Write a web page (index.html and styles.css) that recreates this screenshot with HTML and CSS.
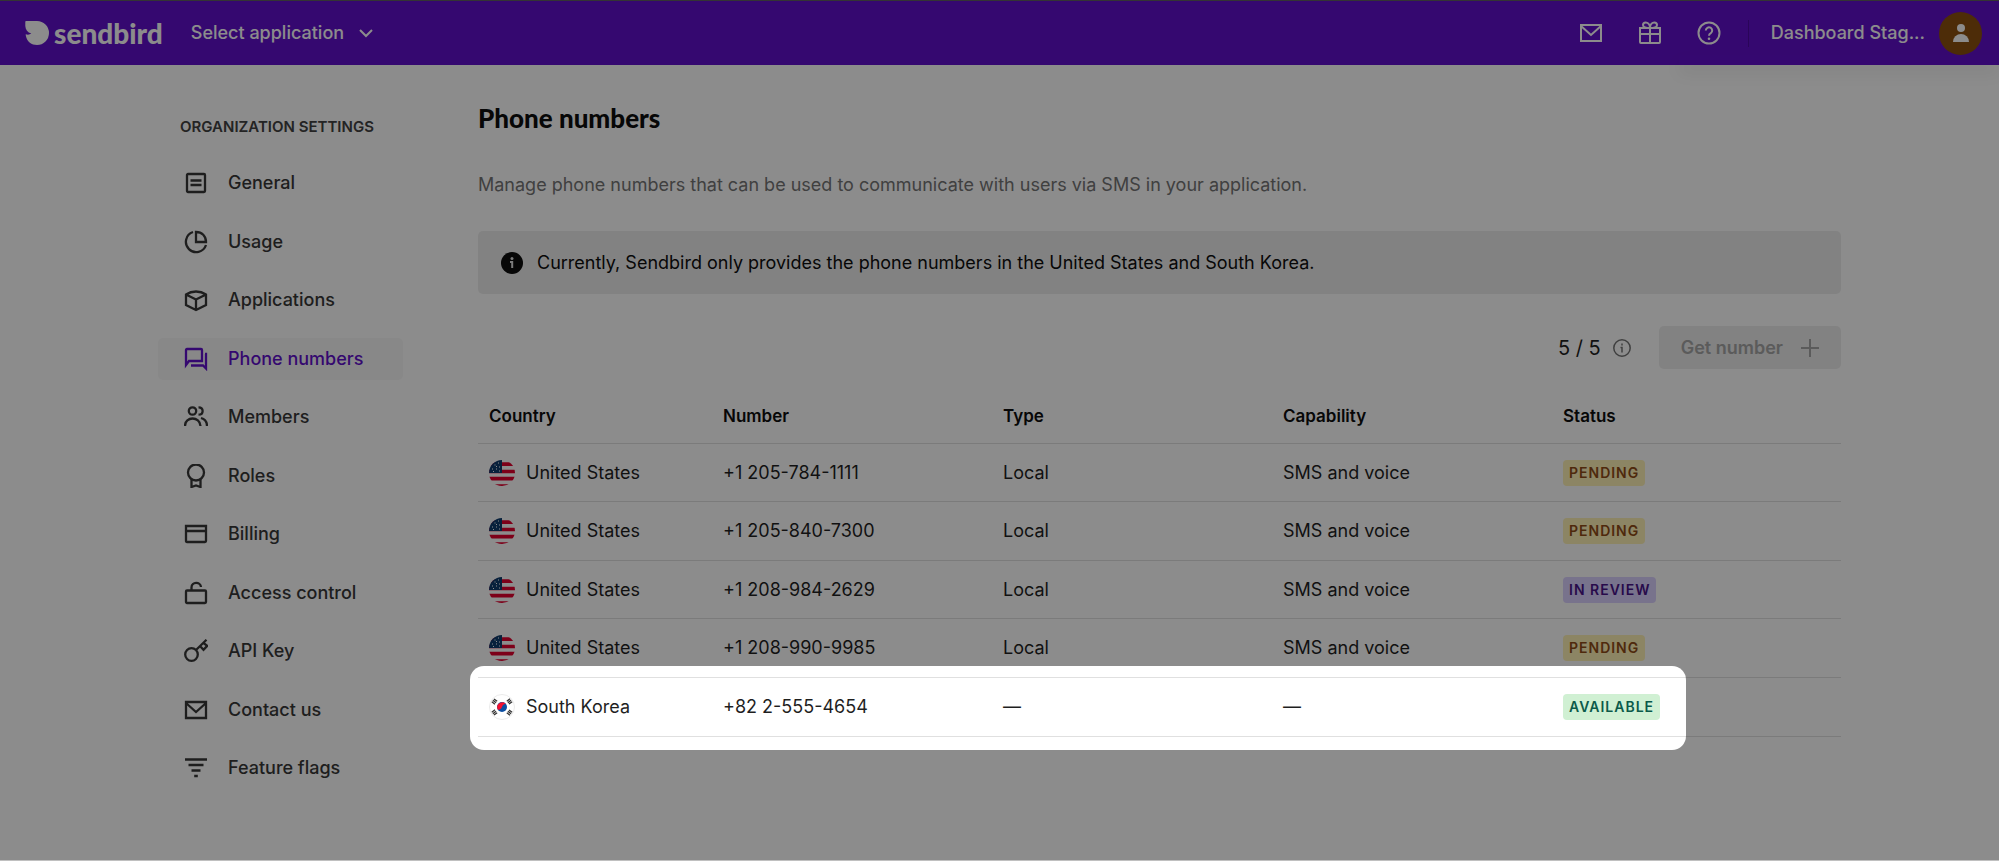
FILE: index.html
```
<!DOCTYPE html>
<html lang="en">
<head>
    <meta charset="UTF-8">
    <meta name="viewport" content="width=device-width, initial-scale=1.0">
    <title>Phone numbers - Sendbird Dashboard</title>
    <link rel="stylesheet" href="styles.css">
</head>
<body>
    <!-- Shared flags -->
    <svg class="defs" width="0" height="0" aria-hidden="true">
        <symbol id="flag-us" viewBox="0 0 26 26">
            <clipPath id="round"><circle cx="13" cy="13" r="13"/></clipPath>
            <g clip-path="url(#round)">
                <rect width="26" height="26" fill="#fff"/>
                <path d="M0 4.200h26M0 11.500h26M0 18.700h26M0 26h26" stroke="#e3002f" stroke-width="3.700"/>
                <rect width="13" height="13" fill="#0f3c6e"/>
                <path d="M9 3h1M5.500 5h1M10 7h1M3 9h1M7 9h1M7 6.500h1M4 11.500h1M10 11h1" stroke="#fff" stroke-width="1"/>
            </g>
        </symbol>
        <symbol id="flag-kr" viewBox="0 0 26 26">
            <circle cx="13" cy="13" r="12.5" fill="#fff" stroke="#ebebeb"/>
            <circle cx="13" cy="13" r="5" fill="#0b4ea2"/>
            <path d="M8.700 15.500a5 5 0 0 1 8.600-5c-1.400-1-3.200-.5-4.300 2.500-1 2.500-2.800 3.300-4.300 2.500z" fill="#f5102f"/>
            <g stroke="#333" stroke-width="4" stroke-dasharray="1.300 .5">
                <path d="M4 9.500l3-4M19 20.500l3-4M4 16.500l3 4M19 5.500l3 4"/>
            </g>
        </symbol>
    </svg>

    <header class="header">
        <a href="#" class="logo">
            <svg class="logo-mark" viewBox="0 0 24 24" fill="currentColor"><path d="M1 0h11a12 12 0 1 1 0 24C6.500 24 2.200 20.500 1 15.500c-.2-1-.3-1.600-.3-2.300 2 .8 4 .5 5.600-.7C2.500 11.500.5 8.500.3 5V1q0-1 .7-1z"/></svg>
            <span>sendbird</span>
        </a>
        <button type="button" class="app-select">
            Select application
            <svg width="14" height="14" viewBox="0 0 14 14" fill="none" stroke="currentColor" stroke-width="2"><path d="M1 4l6 6 6-6"/></svg>
        </button>
        <div class="header-right">
            <div class="header-icons">
                <button type="button" aria-label="Messages">
                    <svg class="icon" viewBox="0 0 24 24"><path d="M2 4h20v16H2zM2 5l10 9 10-9"/></svg>
                </button>
                <button type="button" aria-label="What's new">
                    <svg class="icon" viewBox="0 0 24 24"><path d="M2 7h20v6H2zM2 13v8q0 1 1 1h18q1 0 1-1v-8M12 7v15M12 7C8 7 5 6 5 4s1-2.500 2.700-2.500S12 3 12 7c0-4 2.600-5.500 4.300-5.500S19 2 19 4s-3 3-7 3"/></svg>
                </button>
                <button type="button" aria-label="Help">
                    <svg class="icon" viewBox="0 0 24 24"><circle cx="12" cy="12" r="10.500"/><path d="M8.800 9.500a3.200 3.200 0 1 1 5 2.700c-1.200.7-1.800 1.300-1.800 2.500"/><circle class="solid" cx="12" cy="17.800" r="1.300"/></svg>
                </button>
            </div>
            <span class="divider"></span>
            <a href="#" class="account">
                Dashboard Stag...
                <span class="avatar">
                    <svg width="16" height="20" viewBox="0 0 16 20" fill="currentColor"><circle cx="8" cy="5" r="4"/><path d="M0 19a8 8 0 0 1 16 0z"/></svg>
                </span>
            </a>
        </div>
    </header>

    <div class="page">
        <nav class="sidebar" aria-label="Organization settings">
            <h2 class="sidebar-title">ORGANIZATION SETTINGS</h2>
            <ul class="menu">
                <li><a href="#"><svg class="icon" viewBox="0 0 24 24"><rect x="3" y="3" width="18" height="18" rx="1"/><path d="M6.500 9.500h11M6.500 14h11"/></svg>General</a></li>
                <li><a href="#"><svg class="icon" viewBox="0 0 24 24"><path d="M9 2A10.300 10.300 0 1 0 22 15M12 2v10h10C22 6 18 2 12 2z"/></svg>Usage</a></li>
                <li><a href="#"><svg class="icon" viewBox="0 0 24 24"><path d="M2 6.500l10 5 10-5M12 11.500V22M2 6.500q4.500-3 10-3t10 3V17l-10 5-10-5z"/></svg>Applications</a></li>
                <li><a href="#" class="active"><svg class="icon" viewBox="0 0 24 24"><path d="M2 18V3q0-1 1-1h14q1 0 1 1v11H5zM7 18.500h12l3 3V7h-1"/></svg>Phone numbers</a></li>
                <li><a href="#"><svg class="icon" viewBox="0 0 24 24"><circle cx="8.500" cy="6" r="3.700"/><path d="M1 21c0-10 15-10 15.500 0M14.500 2.300c5.500 0 5.500 7.400 0 7.400M17 13c3.500 1 6 4 6 8"/></svg>Members</a></li>
                <li><a href="#"><svg class="icon" viewBox="0 0 24 24"><circle cx="12" cy="8.500" r="8"/><path d="M7.500 15v8l4.500-1.500 4.500 1.500v-8"/></svg>Roles</a></li>
                <li><a href="#"><svg class="icon" viewBox="0 0 24 24"><path d="M2 4h20v15q0 1-1 1H3q-1 0-1-1zM2 9h20"/></svg>Billing</a></li>
                <li><a href="#"><svg class="icon" viewBox="0 0 24 24"><rect x="2" y="9.500" width="20" height="12.500" rx="1"/><path d="M7.500 9.500V6.500c0-6 9-6 9.500-.5"/></svg>Access control</a></li>
                <li><a href="#"><svg class="icon" viewBox="0 0 24 24"><circle cx="7.500" cy="15.500" r="6.300"/><path d="M12 11L22.500.8M16 7l3.500 3.800 3.700-4L19.500 4"/></svg>API Key</a></li>
                <li><a href="#"><svg class="icon" viewBox="0 0 24 24"><path d="M2 4h20v16H2zM2 5l10 9 10-9"/></svg>Contact us</a></li>
                <li><a href="#"><svg class="icon" viewBox="0 0 24 24"><path d="M1 3.500h22M4.500 9h15M7.500 14.500h9M10.200 20h3.600"/></svg>Feature flags</a></li>
            </ul>
        </nav>

        <main class="content">
            <h1>Phone numbers</h1>
            <p class="description">Manage phone numbers that can be used to communicate with users via SMS in your application.</p>

            <div class="notice">
                <svg width="22" height="22" viewBox="0 0 22 22"><circle cx="11" cy="11" r="11" fill="#0d0d0d"/><circle cx="11" cy="6.500" r="1.500" fill="#e0e0e0"/><path d="M9 10h2.200v6" fill="none" stroke="#e0e0e0" stroke-width="2"/></svg>
                Currently, Sendbird only provides the phone numbers in the United States and South Korea.
            </div>

            <div class="toolbar">
                <span class="count">5 / 5</span>
                <svg class="info" width="18" height="18" viewBox="0 0 18 18" fill="none" stroke="currentColor" stroke-width="1.500"><circle cx="9" cy="9" r="8.200"/><path d="M9 4.500v2M7.500 8.500H9v5"/></svg>
                <button type="button" class="get-number" disabled>
                    Get number
                    <svg width="18" height="18" viewBox="0 0 18 18" fill="none" stroke="currentColor" stroke-width="2"><path d="M9 0v18M0 9h18"/></svg>
                </button>
            </div>

            <div class="table-wrap">
                <table>
                    <colgroup>
                        <col class="col-country">
                        <col class="col-data">
                        <col class="col-data">
                        <col class="col-data">
                        <col>
                    </colgroup>
                    <thead>
                        <tr><th>Country</th><th>Number</th><th>Type</th><th>Capability</th><th>Status</th></tr>
                    </thead>
                    <tbody>
                        <tr>
                            <td><div class="country"><svg class="flag"><use href="#flag-us"/></svg>United States</div></td>
                            <td>+1 205-784-1111</td><td>Local</td><td>SMS and voice</td>
                            <td><span class="badge pending">PENDING</span></td>
                        </tr>
                        <tr>
                            <td><div class="country"><svg class="flag"><use href="#flag-us"/></svg>United States</div></td>
                            <td>+1 205-840-7300</td><td>Local</td><td>SMS and voice</td>
                            <td><span class="badge pending">PENDING</span></td>
                        </tr>
                        <tr>
                            <td><div class="country"><svg class="flag"><use href="#flag-us"/></svg>United States</div></td>
                            <td>+1 208-984-2629</td><td>Local</td><td>SMS and voice</td>
                            <td><span class="badge review">IN REVIEW</span></td>
                        </tr>
                        <tr>
                            <td><div class="country"><svg class="flag"><use href="#flag-us"/></svg>United States</div></td>
                            <td>+1 208-990-9985</td><td>Local</td><td>SMS and voice</td>
                            <td><span class="badge pending">PENDING</span></td>
                        </tr>
                        <tr>
                            <td><div class="country"><svg class="flag"><use href="#flag-kr"/></svg>South Korea</div></td>
                            <td>+82 2-555-4654</td><td>—</td><td>—</td>
                            <td><span class="badge available">AVAILABLE</span></td>
                        </tr>
                    </tbody>
                </table>
                <!-- Dims everything except the last row -->
                <div class="spotlight"></div>
            </div>
        </main>
    </div>
</body>
</html>
```
FILE: styles.css
```
* {
    box-sizing: border-box;
}
body {
    margin: 0;
    min-height: 100vh;
    background-color: #fff;
    font-family: Inter, "Liberation Sans", sans-serif;
    font-size: 18px;
    line-height: 24px;
    color: #1f1f1f;
}
/* light line at the bottom edge of the window */
body::after {
    content: "";
    position: fixed;
    left: 0;
    right: 0;
    bottom: 0;
    height: 1px;
    background-color: #c0c0c0;
    z-index: 20;
}
a {
    color: inherit;
    text-decoration: none;
}
button {
    font: inherit;
    color: inherit;
    background: none;
    border: none;
    padding: 0;
    cursor: pointer;
}
.defs {
    position: absolute;
}
.icon {
    display: block;
    flex: none;
    width: 24px;
    height: 24px;
    fill: none;
    stroke: currentColor;
    stroke-width: 2;
}
.icon .solid {
    fill: currentColor;
    stroke: none;
}

/* Header */
.header {
    position: relative;
    display: flex;
    align-items: center;
    height: 65px;
    padding: 0 17px 0 25px;
    border-top: 1px solid #606060;
    background-color: #6210cc;
    color: #fff;
    font-weight: 500;
}
/* soft shadow below the account menu */
.header::after {
    content: "";
    position: absolute;
    right: 0;
    bottom: 0;
    width: 320px;
    height: 10px;
    box-shadow: 0 8px 16px rgba(0, 0, 0, 0.08);
    background-color: #6210cc;
}
.logo {
    display: flex;
    align-items: center;
    gap: 5px;
    font-family: Lato, sans-serif;
    font-size: 28px;
    font-weight: 900;
}
.logo-mark {
    width: 24px;
    height: 24px;
}
.app-select {
    display: flex;
    align-items: center;
    gap: 15px;
    margin-left: 28px;
}
.header-right {
    display: flex;
    align-items: center;
    margin-left: auto;
}
.header-icons {
    display: flex;
    gap: 35px;
    margin-right: 27px;
}
.divider {
    width: 1px;
    height: 27px;
    margin-right: 22px;
    background-color: #4d0aa3;
}
.account {
    display: flex;
    align-items: center;
    gap: 14px;
}
.avatar {
    display: flex;
    align-items: center;
    justify-content: center;
    width: 43px;
    height: 43px;
    border-radius: 50%;
    background-color: #8c500f;
}

/* Layout */
.page {
    display: flex;
    gap: 75px;
    padding: 0 158px;
}
.sidebar {
    flex: none;
    width: 245px;
    padding-top: 50px;
}
.content {
    flex: 1;
    min-width: 0;
    padding-top: 37px;
}

/* Sidebar */
.sidebar-title {
    margin: 0 0 15px 22px;
    font-size: 15px;
    font-weight: 600;
    color: #424242;
}
.menu {
    margin: 0;
    padding: 0;
    list-style: none;
}
.menu li {
    display: flex;
    align-items: center;
    height: 58px;
}
.menu li:nth-child(even) {
    height: 59px;
}
.menu a {
    display: flex;
    flex: 1;
    align-items: center;
    gap: 20px;
    height: 42px;
    padding-left: 26px;
    border-radius: 5px;
    font-weight: 500;
    color: #383838;
}
.menu .icon {
    stroke-width: 2.3;
}
.menu a.active {
    background-color: #f8f8f8;
    color: #6210cc;
}

/* Content */
h1 {
    margin: 0;
    font-family: Lato, sans-serif;
    font-size: 26px;
    font-weight: 900;
    line-height: 32px;
    color: #0d0d0d;
}
.description {
    margin: 39px 0 34px;
    color: #757575;
}
.notice {
    display: flex;
    align-items: center;
    gap: 14px;
    height: 63px;
    padding-left: 23px;
    border-radius: 5px;
    background-color: #ededed;
    color: #0d0d0d;
}
.toolbar {
    display: flex;
    align-items: center;
    justify-content: flex-end;
    margin: 32px 0 20px;
}
.count {
    font-size: 20px;
}
.info {
    margin: 0 28px 0 12px;
    color: #757575;
}
.get-number {
    display: flex;
    align-items: center;
    gap: 18px;
    height: 43px;
    padding: 0 22px;
    border-radius: 5px;
    background-color: #ededed;
    font-weight: 600;
    color: #a6a6a6;
    cursor: default;
}

/* Table */
.table-wrap {
    position: relative;
}
table {
    width: 100%;
    table-layout: fixed;
    border-collapse: separate;
    border-spacing: 0;
}
.col-country {
    width: 234px;
}
.col-data {
    width: 280px;
}
th,
td {
    padding: 0 11px;
    border-bottom: 1px solid #e0e0e0;
    text-align: left;
}
th {
    height: 55px;
    font-size: 17px;
    font-weight: 600;
    color: #0d0d0d;
}
td {
    height: 58px;
}
tr:nth-child(even) td,
tr:last-child td {
    height: 59px;
}
.country {
    display: flex;
    align-items: center;
    gap: 11px;
}
.flag {
    width: 26px;
    height: 26px;
}
.badge {
    display: inline-block;
    padding: 0 6px;
    border-radius: 4px;
    font-size: 14px;
    font-weight: 600;
    line-height: 26px;
    letter-spacing: 1px;
    vertical-align: middle;
}
.pending {
    background-color: #fff2b6;
    color: #8f4b17;
}
.review {
    background-color: #dbd1ff;
    color: #491389;
}
.available {
    background-color: #d0f0d3;
    color: #0b5a4a;
}
.spotlight {
    position: absolute;
    left: -8px;
    right: 155px;
    bottom: -13px;
    height: 84px;
    border-radius: 14px;
    box-shadow: 0 0 0 9999px rgba(0, 0, 0, 0.45);
    pointer-events: none;
    z-index: 10;
}
```
